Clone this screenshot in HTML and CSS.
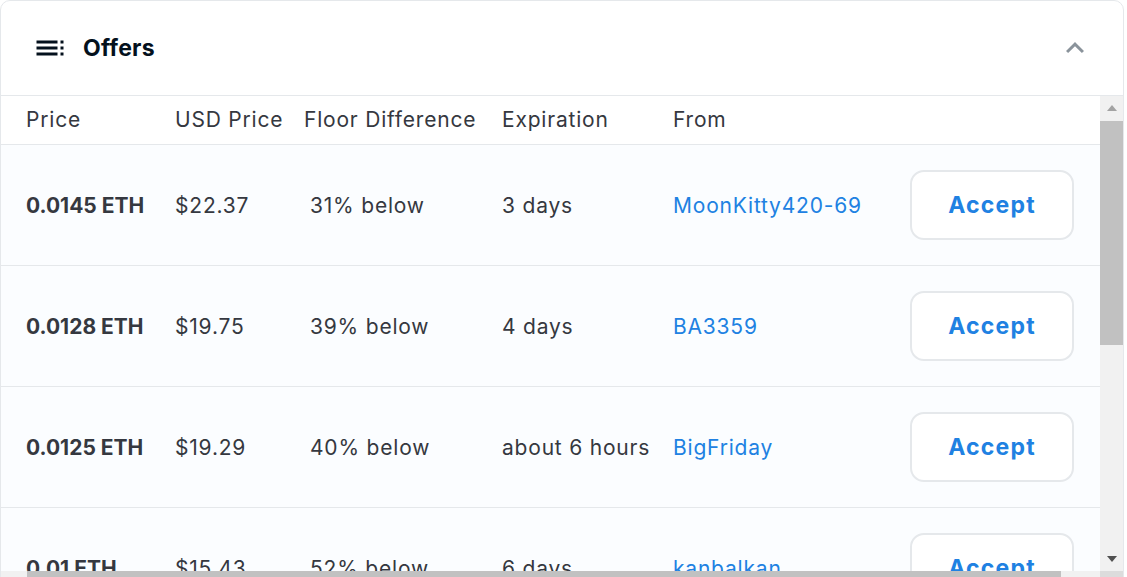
FILE: index.html
```html
<!DOCTYPE html>
<html lang="en">
<head>
    <meta charset="UTF-8">
    <meta name="viewport" content="width=device-width, initial-scale=1.0">
    <title>Offers</title>
    <link rel="stylesheet" href="styles.css">
</head>
<body>

    <section class="offers-panel">
        <header class="panel-header">
            <div class="panel-title">
                <svg class="panel-icon" xmlns="http://www.w3.org/2000/svg" width="36" height="36" viewBox="0 0 24 24" fill="currentColor"><path d="M3 9h14V7H3v2zm0 4h14v-2H3v2zm0 4h14v-2H3v2zm16 0h2v-2h-2v2zm0-10v2h2V7h-2zm0 6h2v-2h-2v2z"/></svg>
                <h2>Offers</h2>
            </div>
            <svg class="panel-toggle" xmlns="http://www.w3.org/2000/svg" width="36" height="36" viewBox="0 0 24 24" fill="currentColor"><path d="M12 8l-6 6 1.41 1.41L12 10.83l4.59 4.58L18 14z"/></svg>
        </header>

        <div class="offers-body">
            <div class="offers-viewport">
                <div class="offers-table">
                    <div class="offer-row head-row">
                        <span>Price</span>
                        <span>USD Price</span>
                        <span>Floor Difference</span>
                        <span>Expiration</span>
                        <span>From</span>
                        <span></span>
                    </div>

                    <div class="offer-row">
                        <span class="cell-price">0.0145 ETH</span>
                        <span>$22.37</span>
                        <span class="cell-floor">31% below</span>
                        <span>3 days</span>
                        <a class="cell-from" href="#">MoonKitty420-69</a>
                        <button class="accept-btn">Accept</button>
                    </div>

                    <div class="offer-row">
                        <span class="cell-price">0.0128 ETH</span>
                        <span>$19.75</span>
                        <span class="cell-floor">39% below</span>
                        <span>4 days</span>
                        <a class="cell-from" href="#">BA3359</a>
                        <button class="accept-btn">Accept</button>
                    </div>

                    <div class="offer-row">
                        <span class="cell-price">0.0125 ETH</span>
                        <span>$19.29</span>
                        <span class="cell-floor">40% below</span>
                        <span>about 6 hours</span>
                        <a class="cell-from" href="#">BigFriday</a>
                        <button class="accept-btn">Accept</button>
                    </div>

                    <div class="offer-row">
                        <span class="cell-price">0.01 ETH</span>
                        <span>$15.43</span>
                        <span class="cell-floor">52% below</span>
                        <span>6 days</span>
                        <a class="cell-from" href="#">kanbalkan</a>
                        <button class="accept-btn">Accept</button>
                    </div>

                    <div class="offer-row">
                        <span class="cell-price">0.009 ETH</span>
                        <span>$13.89</span>
                        <span class="cell-floor">57% below</span>
                        <span>7 days</span>
                        <a class="cell-from" href="#">degenape</a>
                        <button class="accept-btn">Accept</button>
                    </div>

                    <div class="offer-row">
                        <span class="cell-price">0.008 ETH</span>
                        <span>$12.34</span>
                        <span class="cell-floor">62% below</span>
                        <span>2 days</span>
                        <a class="cell-from" href="#">0x7a21f4</a>
                        <button class="accept-btn">Accept</button>
                    </div>
                </div>
            </div>

            <div class="vscroll">
                <span class="sb-btn"><i class="arrow arrow-up"></i></span>
                <span class="sb-thumb"></span>
                <span class="sb-btn"><i class="arrow arrow-down"></i></span>
            </div>

            <div class="hscroll">
                <span class="sb-btn"><i class="arrow arrow-left"></i></span>
                <span class="sb-thumb"></span>
                <span class="sb-btn"><i class="arrow arrow-right"></i></span>
            </div>
            <div class="sb-corner"></div>
        </div>
    </section>

</body>
</html>
```

FILE: styles.css
```css
:root {
    --color-text: #353840;
    --color-title: #04111d;
    --color-border: #e5e8eb;
    --color-link: #2081e2;
    --color-row: #fbfdff;
    --color-muted: #8a939b;
    --sb-track: #f1f1f1;
    --sb-thumb: #c1c1c1;
}
* { box-sizing: border-box; }
body { margin: 0; font-family: 'Inter', 'Open Sans', sans-serif; color: var(--color-text); background: #fff; overflow: hidden; }

.offers-panel { margin: 0 3px 0 0; border: 1px solid var(--color-border); border-radius: 10px 10px 0 0; background: #fff; }

.panel-header { height: 95px; display: flex; align-items: center; justify-content: space-between; padding: 0 30px 0 31px; border-bottom: 1px solid var(--color-border); }
.panel-title { display: flex; align-items: center; gap: 15px; }
.panel-icon { color: var(--color-title); }
.panel-title h2 { margin: 0; font-size: 23px; font-weight: 700; color: var(--color-title); letter-spacing: 0.2px; }
.panel-toggle { color: var(--color-muted); }

.offers-body { display: grid; grid-template-columns: 1fr 23px; grid-template-rows: 475px 23px; }
.offers-viewport { overflow: hidden; }
.offers-table { width: 1119px; }

.offer-row { display: grid; grid-template-columns: 149px 129px 198px 171px 1fr 164px; align-items: center; height: 121px; padding: 0 46px 0 25px; border-bottom: 1px solid var(--color-border); background: var(--color-row); font-size: 21px; letter-spacing: 0.8px; }
.offer-row.head-row { height: 49px; padding-bottom: 1px; background: #fff; }
.cell-price { font-weight: 700; letter-spacing: 0; }
.cell-floor { padding-left: 6px; }
.cell-from { color: var(--color-link); text-decoration: none; }

.accept-btn { width: 164px; height: 70px; border: 2px solid var(--color-border); border-radius: 14px; background: #fff; color: var(--color-link); font-family: inherit; font-size: 23px; font-weight: 700; letter-spacing: 1.2px; cursor: pointer; }

/* fake classic scrollbars */
.vscroll { display: flex; flex-direction: column; background: var(--sb-track); }
.vscroll .sb-btn { height: 24px; }
.vscroll .sb-thumb { height: 224px; margin-top: 1px; margin-bottom: auto; }
.hscroll { display: flex; background: var(--sb-track); }
.hscroll .sb-btn { width: 24px; }
.hscroll .sb-thumb { width: 1034px; margin-left: 2px; margin-right: auto; }
.sb-thumb { display: block; background: var(--sb-thumb); }
.sb-btn { display: flex; align-items: center; justify-content: center; }
.sb-corner { background: #dcdcdc; }
.arrow { width: 0; height: 0; }
.arrow-up { border-left: 5.5px solid transparent; border-right: 5.5px solid transparent; border-bottom: 6px solid #a3a3a3; }
.arrow-down { border-left: 5.5px solid transparent; border-right: 5.5px solid transparent; border-top: 6px solid #505050; }
.arrow-left { border-top: 5.5px solid transparent; border-bottom: 5.5px solid transparent; border-right: 6px solid #a3a3a3; }
.arrow-right { border-top: 5.5px solid transparent; border-bottom: 5.5px solid transparent; border-left: 6px solid #505050; }
```
